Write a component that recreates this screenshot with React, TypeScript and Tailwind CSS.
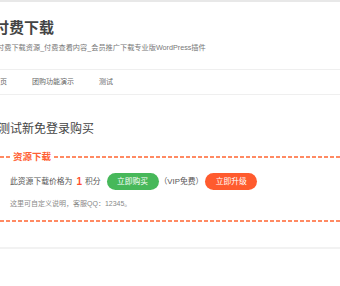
import React from "react";

const dash =
  "bg-[repeating-linear-gradient(to_right,#ff8a63_0px,#ff8a63_4px,transparent_4px,transparent_6px)]";

export default function App() {
  return (
    <div
      className="w-[340px] h-[286px] bg-white overflow-hidden"
      style={{ fontFamily: '"Liberation Sans","Noto Sans CJK SC",sans-serif' }}
    >
      <div className="h-[2px] bg-[#e8e8e8]" />
      <header className="h-[67px] pt-[14px]">
        <div className="h-[24px] leading-[24px] text-[15px] font-bold text-[#444] ml-[-6px] whitespace-nowrap">
          付费下载
        </div>
        <div className="mt-[1px] h-[14px] leading-[14px] text-[7.2px] text-[#777] ml-[-3px] whitespace-nowrap">
          付费下载资源_付费查看内容_会员推广下载专业版WordPress插件
        </div>
      </header>
      <div className="h-px bg-[#efefef]" />
      <nav className="h-[24px] flex items-center gap-[25px] ml-[-7px] text-[7px] text-[#666] whitespace-nowrap">
        <span>首页</span>
        <span>团购功能演示</span>
        <span>测试</span>
      </nav>
      <div className="h-px bg-[#efefef]" />
      <main className="pt-[24px]">
        <h1 className="h-[20px] leading-[20px] text-[12px] text-[#444] ml-[-2px] whitespace-nowrap">
          测试新免登录购买
        </h1>
        <section className="mt-[11px]">
          <div className="h-[14px] flex items-center">
            <div className={`w-[10px] h-[2px] ${dash}`} />
            <span className="mx-[3px] text-[9.5px] font-bold text-[#ff5f33] whitespace-nowrap leading-[14px]">
              资源下载
            </span>
            <div className={`flex-1 h-[2px] ${dash}`} />
          </div>
          <div className="mt-[9px] h-[17px] flex items-center pl-[10px] text-[7.8px] text-[#555] whitespace-nowrap">
            <span>此资源下载价格为</span>
            <span className="ml-[4px] text-[10px] font-bold text-[#ff4f2f]">1</span>
            <span className="ml-[3px]">积分</span>
            <span className="ml-[6px] w-[52px] h-[17px] rounded-full bg-[#47b85a] text-white flex items-center justify-center">
              立即购买
            </span>
            <span className="ml-[1px]">（VIP免费）</span>
            <span className="ml-[2px] w-[52px] h-[17px] rounded-full bg-[#ff5b2e] text-white flex items-center justify-center">
              立即升级
            </span>
          </div>
          <div className="mt-[8px] h-[12px] leading-[12px] pl-[10px] text-[7px] text-[#888] whitespace-nowrap">
            这里可自定义说明，客服QQ：12345。
          </div>
          <div className={`mt-[10px] h-[2px] ${dash}`} />
        </section>
        <div className="mt-[25px] h-[2px] bg-[#f2f2f2]" />
      </main>
    </div>
  );
}
